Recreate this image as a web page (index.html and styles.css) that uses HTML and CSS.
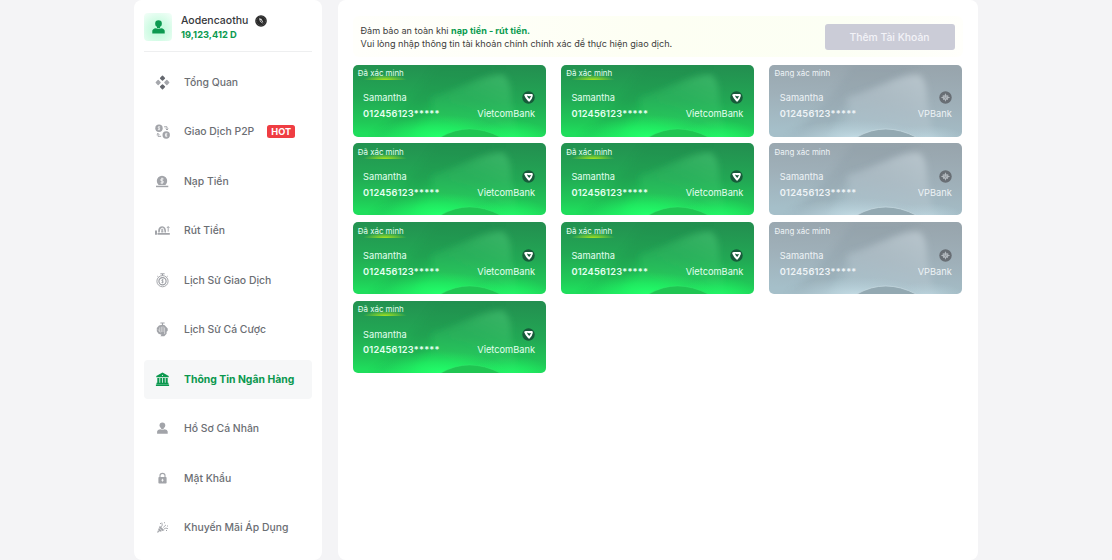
FILE: index.html
```html
<!DOCTYPE html>
<html lang="vi">
<head>
<meta charset="utf-8">
<title>Thông Tin Ngân Hàng</title>
<link rel="stylesheet" href="styles.css">
</head>
<body>
<svg class="defs" width="0" height="0" aria-hidden="true">
  <defs>
    <linearGradient id="g-base" x1="0.7" y1="0" x2="0.6" y2="1"><stop offset="0" stop-color="#238f50"/><stop offset="0.5" stop-color="#22a854"/><stop offset="0.85" stop-color="#20c957"/><stop offset="1" stop-color="#1fdd5c"/></linearGradient>
    <radialGradient id="g-glow" cx="0.5" cy="0.5" r="0.5"><stop offset="0" stop-color="#22ff6b"/><stop offset="0.5" stop-color="#20f864" stop-opacity="0.6"/><stop offset="1" stop-color="#20f060" stop-opacity="0"/></radialGradient>
    <linearGradient id="g-beam" x1="1" y1="0" x2="0.2" y2="1"><stop offset="0" stop-color="#5fdc86" stop-opacity="0.45"/><stop offset="0.45" stop-color="#3fce70" stop-opacity="0.25"/><stop offset="1" stop-color="#2fe068" stop-opacity="0.1"/></linearGradient>
    <linearGradient id="s-base" x1="0.7" y1="0" x2="0.5" y2="1"><stop offset="0" stop-color="#98a5ad"/><stop offset="0.5" stop-color="#9fb0b9"/><stop offset="1" stop-color="#a5bfc9"/></linearGradient>
    <linearGradient id="s-beam" x1="1" y1="0" x2="0.2" y2="1"><stop offset="0" stop-color="#d0dce2" stop-opacity="0.6"/><stop offset="0.5" stop-color="#bccad2" stop-opacity="0.4"/><stop offset="1" stop-color="#bdd2da" stop-opacity="0.15"/></linearGradient>
    <radialGradient id="s-glow" cx="0.5" cy="0.5" r="0.5"><stop offset="0" stop-color="#c3dbe4"/><stop offset="1" stop-color="#b4cdd6" stop-opacity="0"/></radialGradient>
    <filter id="soft" x="-20%" y="-20%" width="140%" height="140%"><feGaussianBlur stdDeviation="3"/></filter>
    <symbol id="art-green" viewBox="0 0 193 72" preserveAspectRatio="none">
      <rect width="193" height="72" fill="url(#g-base)"/>
      <path d="M18 72C48 52 66 26 84 0H150L120 18L78 33L60 72Z" fill="#1f8e4c" opacity=".22" filter="url(#soft)"/>
      <path d="M78 33C108 24 132 8 150 10Q158 14 158 36L164 72H60Q88 56 78 33Z" fill="url(#g-beam)" filter="url(#soft)"/>
      <ellipse cx="86" cy="72" rx="68" ry="22" fill="url(#g-glow)"/>
      <ellipse cx="158" cy="74" rx="42" ry="19" fill="url(#g-glow)" opacity=".8"/>
      <path d="M88 72Q116 56 147 72Z" fill="#20c552"/>
      <path d="M88 72Q116 56 147 72" fill="none" stroke="#42ef79" stroke-width=".7" opacity=".5"/>
    </symbol>
    <symbol id="art-silver" viewBox="0 0 193 72" preserveAspectRatio="none">
      <rect width="193" height="72" fill="url(#s-base)"/>
      <path d="M18 72C48 52 66 26 84 0H150L120 18L78 33L60 72Z" fill="#8797a1" opacity=".25" filter="url(#soft)"/>
      <path d="M78 33C108 24 132 8 150 10Q158 14 158 36L164 72H60Q88 56 78 33Z" fill="url(#s-beam)" filter="url(#soft)"/>
      <ellipse cx="86" cy="73" rx="72" ry="18" fill="url(#s-glow)"/>
      <ellipse cx="158" cy="74" rx="38" ry="14" fill="url(#s-glow)" opacity=".8"/>
      <path d="M88 72Q116 56 147 72Z" fill="#93a9b2"/>
      <path d="M88 72Q116 56 147 72" fill="none" stroke="#cadde4" stroke-width=".7"/>
    </symbol>
    <symbol id="vcb" viewBox="0 0 14 14">
      <circle cx="7" cy="7" r="6.7" fill="#175a3a"/>
      <path d="M2.3 4.4Q3 3.1 4.8 3.3H10.5Q12.1 3.5 11.6 5.3Q10.9 8.7 8.2 11.3Q7.5 11.7 6.7 11Q3.6 8.3 2.3 4.4Z" fill="#fff"/>
      <path d="M5.3 4.5Q6.6 6.5 10 5.3Q8.9 6.8 7.8 8.6Q5.8 7.2 5.3 4.5Z" fill="#175a3a"/>
    </symbol>
    <symbol id="vpb" viewBox="0 0 14 14">
      <circle cx="7" cy="7" r="6.7" fill="#686e74"/>
      <path d="M7 2.5L8.3 5L10 4.3L9.7 6L12 7L9.5 8.1L9.7 9.6L8 9.2L7 11.5L6 9.2L4.3 9.6L4.5 8.1L2 7L4.3 6L4 4.3L5.7 5Z" fill="#b3b9be"/>
      <path d="M5.3 5.5L7 8.3L8.7 5.5" stroke="#777e84" stroke-width=".5" fill="none"/>
    </symbol>
    <symbol id="user" viewBox="0 0 14 14"><circle cx="7" cy="3.9" r="3.1"/><path d="M5.6 5.5H8.4V8.2H5.6Z"/><path d="M1.2 13V10.6Q1.4 8.6 4.6 8.1Q7 9.4 9.4 8.1Q12.6 8.6 12.8 10.6V13Z"/></symbol>
  </defs>
</svg>

<div class="page">
  <aside class="sidebar">
    <div class="profile">
      <div class="avatar"><svg width="15" height="16" viewBox="0 0 14 14"><use href="#user" width="14" height="14"/></svg></div>
      <div class="who">
        <div class="name">Aodencaothu
          <svg width="12" height="12" viewBox="0 0 12 12"><circle cx="6" cy="6" r="5.8" fill="#292929"/><circle cx="6" cy="6" r="4.4" fill="none" stroke="#777" stroke-width=".6" stroke-dasharray="1 .8"/><path d="M4 3.2L6.4 3.8L8.3 7.2L7.4 8.5L4.9 6.2Z" fill="#ddd"/><path d="M5.5 5L7.6 7.8" stroke="#222" stroke-width=".9"/></svg>
        </div>
        <div class="balance">19,123,412 D</div>
      </div>
    </div>
    <nav class="menu">
      <a class="item"><svg viewBox="0 0 15 15"><g stroke-linejoin="round" stroke-width="1.4"><path d="M7.5 1.3L9.4 3.2L7.5 5.1L5.6 3.2ZM7.5 9.9L9.4 11.8L7.5 13.7L5.6 11.8Z" fill="#64676e" stroke="#64676e"/><path d="M3.2 5.6L5.1 7.5L3.2 9.4L1.3 7.5ZM11.8 5.6L13.7 7.5L11.8 9.4L9.9 7.5Z" fill="#a5a7ac" stroke="#a5a7ac"/></g></svg><span>Tổng Quan</span></a>
      <a class="item"><svg viewBox="0 0 15 15"><circle cx="4" cy="4.2" r="3.7"/><circle cx="11.2" cy="11" r="3.7"/><path d="M4 2V6.4M5.2 2.9H3.4Q2.5 4 4 4.2Q5.5 4.6 4.6 5.5H2.8M11.2 8.8V13.2M12.5 9.8H10.5V12.2H12.5M9.8 11H12" fill="none" stroke="#fff" stroke-width=".6"/><path d="M9.1 2.8H12V5.8M10.7 4.7L12 6L13.3 4.7M6.1 12.3H3V9.5M1.7 10.7L3 9.4L4.3 10.7" fill="none" stroke="#a2a4a9"/></svg><span>Giao Dịch P2P</span><b class="hot">HOT</b></a>
      <a class="item"><svg viewBox="0 0 15 15"><path d="M3.6 11Q1.8 9.3 1.8 7A5.2 5.2 0 0 1 12.2 7Q12.2 9.3 10.4 11Z"/><path d="M1 11.7H13.3V13.2H1Z"/><path d="M7 3.6V10.2M8.6 4.9H6.3Q4.7 6.7 7 6.9Q9.3 7.2 7.9 8.9H5.5" fill="none" stroke="#fff" stroke-width=".8"/></svg><span>Nạp Tiền</span></a>
      <a class="item"><svg viewBox="0 0 15 15"><path d="M0 7.5H2V11.8H0ZM2.5 10H14.8V11.8H2.5ZM3.2 9.4Q2.6 3.7 7.1 3.2Q11.4 3.7 11 9.4H9.6L9 5.8L7.2 4.6L5.3 5.9L4.7 9.4Z"/><path d="M7.2 5.7V9.4M6 8.8H8.5M6 7H8.4M13.2 8.7V3.5M11.9 5L13.2 3.6L14.5 5" fill="none" stroke="#a2a4a9" stroke-width=".9"/></svg><span>Rút Tiền</span></a>
      <a class="item"><svg viewBox="0 0 15 15"><g fill="none" stroke="#9b9da3"><path d="M5.4 .8H9.6M7.5 1V2.7M2.4 3.2L3.5 4.2M12.6 3.2L11.5 4.2"/><circle cx="7.5" cy="8.2" r="5.6" stroke-width=".9"/><circle cx="7.5" cy="8.2" r="3.6" stroke-width="1.2"/><path d="M7.5 6V10.4M8.7 6.9H6.9Q6.2 8 7.5 8.2Q8.9 8.5 8.1 9.5H6.4" stroke-width=".7"/></g></svg><span>Lịch Sử Giao Dịch</span></a>
      <a class="item"><svg viewBox="0 0 15 15"><path d="M5.4 .4H9.6V1.4H8V2.7Q10.2 3 10.8 4.5L12.7 6.4V8.7L11.6 9.8V11.8L9.3 14.2H5.4L6.5 12.7L3.5 11.7L1.8 9.2V6L4 3.5L7 2.7V1.4H5.4Z"/><path d="M4.7 5.4V9.6M6.3 4.7V10M8 4.4V10M9.6 5.5V12M3 7.4L5.7 10.5" stroke="#fff" stroke-width=".5"/></svg><span>Lịch Sử Cá Cược</span></a>
      <a class="item active"><svg viewBox="0 0 15 15"><path d="M1.3 5.2V3.9L7.5 .6L13.7 3.9V5.2ZM2.3 5.9H4.4V10.8H2.3ZM5.2 5.9H7.1V10.8H5.2ZM7.9 5.9H9.8V10.8H7.9ZM10.6 5.9H12.7V10.8H10.6ZM1.5 10.8H13.5V12.2H1.5ZM.9 12.5H14.1V13.9H.9Z"/><circle cx="7.5" cy="3.3" r=".6" fill="#f6f7f8"/></svg><span>Thông Tin Ngân Hàng</span></a>
      <a class="item"><svg viewBox="0 0 15 15"><use href="#user" x="1" y=".8" width="12.8" height="12.8"/></svg><span>Hồ Sơ Cá Nhân</span></a>
      <a class="item"><svg viewBox="0 0 15 15"><rect x="3.4" y="6" width="8.2" height="6.5" rx=".8"/><path d="M5 6V4.5Q5 2.4 7.5 2.4Q10 2.4 10 4.5V6" fill="none" stroke="#a2a4a9" stroke-width="1.1"/><path d="M7.5 7.8V10.6M6.3 9.2H8.7" stroke="#fff" stroke-width=".8"/></svg><span>Mật Khẩu</span></a>
      <a class="item"><svg viewBox="0 0 15 15"><path d="M2 12.8L4.8 5.7L9.4 10.3Z"/><path d="M4.2 8L7.3 11M3.2 10.4L5 12" stroke="#fff" stroke-width=".6"/><path d="M6.3 6.8Q8 5.5 6.8 2.6M8.3 7.4L11 4.9M9 9Q10.8 7.3 13 8.7" fill="none" stroke="#a2a4a9" stroke-width=".9"/><path d="M5 2.9H6V3.9H5ZM9 2.3H10V3.3H9ZM12 5.5H13V6.5H12ZM11 10H12V11H11Z"/></svg><span>Khuyến Mãi Áp Dụng</span></a>
    </nav>
  </aside>

  <main class="content">
    <header class="notice">
      <p>Đảm bảo an toàn khi <b>nạp tiền - rút tiền.</b><br>Vui lòng nhập thông tin tài khoản chính chính xác để thực hiện giao dịch.</p>
      <button class="add">Thêm Tài Khoản</button>
    </header>
    <section class="cards">
      <article class="card"><svg class="art"><use href="#art-green"/></svg><div class="body"><span class="status">Đã xác minh</span><div class="row"><span class="owner">Samantha</span><svg class="logo"><use href="#vcb"/></svg></div><div class="row"><b class="number">012456123*****</b><span class="bank">VietcomBank</span></div></div></article>
      <article class="card"><svg class="art"><use href="#art-green"/></svg><div class="body"><span class="status">Đã xác minh</span><div class="row"><span class="owner">Samantha</span><svg class="logo"><use href="#vcb"/></svg></div><div class="row"><b class="number">012456123*****</b><span class="bank">VietcomBank</span></div></div></article>
      <article class="card pending"><svg class="art"><use href="#art-silver"/></svg><div class="body"><span class="status">Đang xác minh</span><div class="row"><span class="owner">Samantha</span><svg class="logo"><use href="#vpb"/></svg></div><div class="row"><b class="number">012456123*****</b><span class="bank">VPBank</span></div></div></article>
      <article class="card"><svg class="art"><use href="#art-green"/></svg><div class="body"><span class="status">Đã xác minh</span><div class="row"><span class="owner">Samantha</span><svg class="logo"><use href="#vcb"/></svg></div><div class="row"><b class="number">012456123*****</b><span class="bank">VietcomBank</span></div></div></article>
      <article class="card"><svg class="art"><use href="#art-green"/></svg><div class="body"><span class="status">Đã xác minh</span><div class="row"><span class="owner">Samantha</span><svg class="logo"><use href="#vcb"/></svg></div><div class="row"><b class="number">012456123*****</b><span class="bank">VietcomBank</span></div></div></article>
      <article class="card pending"><svg class="art"><use href="#art-silver"/></svg><div class="body"><span class="status">Đang xác minh</span><div class="row"><span class="owner">Samantha</span><svg class="logo"><use href="#vpb"/></svg></div><div class="row"><b class="number">012456123*****</b><span class="bank">VPBank</span></div></div></article>
      <article class="card"><svg class="art"><use href="#art-green"/></svg><div class="body"><span class="status">Đã xác minh</span><div class="row"><span class="owner">Samantha</span><svg class="logo"><use href="#vcb"/></svg></div><div class="row"><b class="number">012456123*****</b><span class="bank">VietcomBank</span></div></div></article>
      <article class="card"><svg class="art"><use href="#art-green"/></svg><div class="body"><span class="status">Đã xác minh</span><div class="row"><span class="owner">Samantha</span><svg class="logo"><use href="#vcb"/></svg></div><div class="row"><b class="number">012456123*****</b><span class="bank">VietcomBank</span></div></div></article>
      <article class="card pending"><svg class="art"><use href="#art-silver"/></svg><div class="body"><span class="status">Đang xác minh</span><div class="row"><span class="owner">Samantha</span><svg class="logo"><use href="#vpb"/></svg></div><div class="row"><b class="number">012456123*****</b><span class="bank">VPBank</span></div></div></article>
      <article class="card"><svg class="art"><use href="#art-green"/></svg><div class="body"><span class="status">Đã xác minh</span><div class="row"><span class="owner">Samantha</span><svg class="logo"><use href="#vcb"/></svg></div><div class="row"><b class="number">012456123*****</b><span class="bank">VietcomBank</span></div></div></article>
    </section>
  </main>
</div>
</body>
</html>
```
FILE: styles.css
```css
* { box-sizing: border-box; }
body { margin: 0; background: #f4f4f6; font-family: Inter, "Noto Sans", sans-serif; color: #36383c; }
.defs { position: absolute; }
.page { display: flex; gap: 15.5px; height: 560px; padding-left: 134px; overflow: hidden; }
.sidebar { width: 188px; background: #fff; border-radius: 8px; padding: 0 10px; }
.content { width: 640.5px; background: #fff; border-radius: 8px; padding: 16px 15px 0; }

.profile { display: flex; gap: 9px; height: 52px; padding-top: 13px; border-bottom: 1px solid #eeeff0; }
.avatar { width: 28px; height: 28px; border-radius: 4px; background: radial-gradient(circle at 50% 60%, #b9f9d7, #d5fce7 50%, #effef6 90%); display: flex; align-items: center; justify-content: center; fill: #0c9950; }
.name { display: flex; align-items: center; gap: 7px; height: 15px; font-size: 10.5px; font-weight: 500; white-space: nowrap; }
.balance { font-size: 9.35px; line-height: 14px; font-weight: 700; color: #0b9a50; white-space: nowrap; }

.menu { display: flex; flex-direction: column; gap: 10.5px; padding-top: 10.5px; }
.item { display: flex; align-items: center; height: 39px; padding-left: 11px; border-radius: 4px; font-size: 10.4px; font-weight: 500; color: #6b6e73; white-space: nowrap; }
.item svg { width: 15px; height: 15px; margin-right: 14px; fill: #a2a4a9; flex: none; }
.item.active { background: #f6f7f8; color: #0a984e; font-weight: 700; }
.item.active svg { fill: #0a984e; }
.hot { margin-left: 13px; width: 28px; height: 13px; border-radius: 2.5px; background: #ef3d42; color: #fff; font-size: 9.2px; line-height: 13px; text-align: center; }

.notice { display: flex; align-items: center; justify-content: space-between; height: 41px; padding: 0 8.5px 0 8px; background: linear-gradient(90deg, #fffffb, #fdfff3 50%, #fcfff4 80%, #fffffb); border-radius: 6px; }
.notice p { margin: 0; font-size: 9.1px; line-height: 13px; white-space: nowrap; color: #3d403c; }
.notice b { color: #0a9b50; }
.add { width: 130px; height: 26px; border: 0; border-radius: 3px; background: #cbccd7; color: #f3f3f8; font: 500 10.35px Inter, sans-serif; }

.cards { display: grid; grid-template-columns: repeat(3, 193px); column-gap: 15.4px; row-gap: 6.8px; padding-top: 7.6px; }
.card { display: grid; height: 72px; border-radius: 5px; overflow: hidden; color: #e4fff0; }
.art, .body { grid-area: 1 / 1; }
.art { display: block; width: 193px; height: 72px; }
.body { z-index: 1; padding: 2.4px 10.5px 0; }
.status { display: block; width: 59px; height: 13px; margin: 0 0 10px -5.2px; font-size: 7.9px; line-height: 12px; white-space: nowrap; background: radial-gradient(ellipse 22px 5px at 27px 13px, #a9e51e, transparent); }
.pending { color: #eef3f6; }
.pending .status { background: none; }
.row { display: flex; justify-content: space-between; align-items: center; height: 15.7px; white-space: nowrap; font-size: 9.25px; }
.logo { width: 13px; height: 13px; }
.number { font-weight: 600; letter-spacing: .2px; }
```
